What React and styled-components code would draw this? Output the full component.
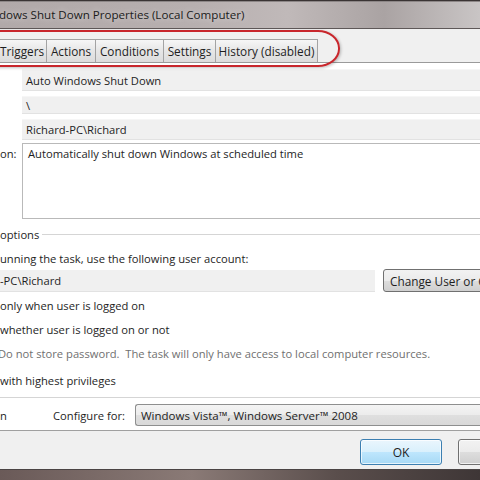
import React from "react";
import styled, { createGlobalStyle } from "styled-components";

const GlobalStyle = createGlobalStyle`
  html, body {
    margin: 0;
    padding: 0;
    background: #f0f0f0;
    overflow: hidden;
  }
  #root {
    width: 480px;
    height: 480px;
  }
`;

const tabs = [
  { name: "Triggers", width: 47, first: true },
  { name: "Actions", width: 50 },
  { name: "Conditions", width: 69 },
  { name: "Settings", width: 53 },
  { name: "History (disabled)", width: 103 },
];

function App() {
  return (
    <Window>
      <GlobalStyle />
      <TitleBar>
        <TitleText>dows Shut Down Properties (Local Computer)</TitleText>
      </TitleBar>
      <TabStrip>
        {tabs.map((t) => (
          <Tab key={t.name} $width={t.width} $first={t.first}>
            {t.name}
          </Tab>
        ))}
        <Highlight />
      </TabStrip>
      <Panel>
        <Field $height={22} $top={6} $left={22}>
          Auto Windows Shut Down
        </Field>
        <Field $height={18} $top={5} $left={22}>
          \
        </Field>
        <Field $height={21} $top={5} $left={22}>
          Richard-PC\Richard
        </Field>
        <DescRow>
          <Label $width={22} $top>on:</Label>
          <TextArea>Automatically shut down Windows at scheduled time</TextArea>
        </DescRow>
        <GroupHeader>
          <span>options</span>
          <Rule />
        </GroupHeader>
        <TextRow $top={10}>unning the task, use the following user account:</TextRow>
        <UserRow>
          <UserField>-PC\Richard</UserField>
          <Button $width={120}>Change User or Group...</Button>
        </UserRow>
        <TextRow $top={6}>only when user is logged on</TextRow>
        <TextRow $top={10}>whether user is logged on or not</TextRow>
        <TextRow $top={10} $muted $shift={-2}>
          Do not store password.&nbsp; The task will only have access to local computer resources.
        </TextRow>
        <TextRow $top={13}>with highest privileges</TextRow>
        <Divider />
        <ConfigRow>
          <Label $width={53}>n</Label>
          <Label $width={82}>Configure for:</Label>
          <Select>Windows Vista™, Windows Server™ 2008</Select>
        </ConfigRow>
      </Panel>
      <Footer>
        <FooterButton $focused>OK</FooterButton>
        <FooterButton>Cancel</FooterButton>
      </Footer>
      <FrameBottom />
    </Window>
  );
}

export default App;

const font = `"Open Sans", "Noto Sans", "Liberation Sans", sans-serif`;

const Window = styled.div`
  width: 480px;
  height: 480px;
  display: flex;
  flex-direction: column;
  background: #f0f0f0;
  font-family: ${font};
  font-size: 11.2px;
  color: #1e1e1e;
  overflow: hidden;
`;

const TitleBar = styled.div`
  height: 27px;
  flex-shrink: 0;
  display: flex;
  align-items: center;
  border-top: 1px solid #3a3434;
  border-bottom: 1px solid #5e5858;
  background: linear-gradient(
    to right,
    #b1a9a9 0%,
    #b7afaf 40%,
    #c0b9b9 60%,
    #aaa3a3 80%,
    #c9c5c5 100%
  );
  box-shadow: inset 0 1px 0 #8d8787;
`;

const TitleText = styled.span`
  font-size: 11.6px;
  color: #1b1b1b;
  margin-left: -1px;
  white-space: nowrap;
  text-shadow: 0 0 6px rgba(255, 255, 255, 0.6);
`;

const TabStrip = styled.div`
  position: relative;
  height: 33px;
  flex-shrink: 0;
  display: flex;
  align-items: flex-end;
  background: #f0f0f0;
  border-bottom: 1px solid #9a9a9a;
`;

const Tab = styled.div`
  width: ${(p) => p.$width}px;
  height: 23px;
  box-sizing: border-box;
  display: flex;
  align-items: center;
  justify-content: ${(p) => (p.$first ? "flex-start" : "center")};
  margin-left: ${(p) => (p.$first ? "0" : "-1px")};
  border: 1px solid #a3a3a3;
  border-bottom: none;
  border-left-width: ${(p) => (p.$first ? "0" : "1px")};
  background: linear-gradient(#f6f6f6, #e6e6e6 50%, #dcdcdc);
  font-size: 11.8px;
  white-space: nowrap;
`;

const Highlight = styled.div`
  position: absolute;
  left: -40px;
  top: 1px;
  width: 376px;
  height: 33px;
  border: 2px solid #c8262c;
  border-radius: 0 22px 22px 0 / 0 18px 18px 0;
  box-shadow: 1px 1px 3px rgba(0, 0, 0, 0.25);
  pointer-events: none;
`;

const Panel = styled.div`
  flex-shrink: 0;
  height: 368px;
  box-sizing: border-box;
  display: flex;
  flex-direction: column;
  background: #ffffff;
  border-bottom: 1px solid #a0a0a0;
`;

const Field = styled.div`
  height: ${(p) => p.$height}px;
  margin-top: ${(p) => p.$top}px;
  margin-left: ${(p) => p.$left}px;
  box-sizing: border-box;
  display: flex;
  align-items: center;
  padding-left: 4px;
  background: #f0f0f0;
  border-top: 1px solid #f6f6f6;
  border-bottom: 1px solid #e2e2e2;
  white-space: nowrap;
`;

const DescRow = styled.div`
  display: flex;
  margin-top: 3px;
  height: 76px;
`;

const Label = styled.div`
  width: ${(p) => p.$width}px;
  flex-shrink: 0;
  white-space: nowrap;
  display: flex;
  align-items: ${(p) => (p.$top ? "flex-start" : "center")};
  padding-top: ${(p) => (p.$top ? "3px" : "0")};
`;

const TextArea = styled.div`
  flex: 1;
  box-sizing: border-box;
  border: 1px solid #b9b9b9;
  border-right: none;
  padding: 2px 5px;
  background: #ffffff;
  white-space: nowrap;
`;

const GroupHeader = styled.div`
  display: flex;
  align-items: center;
  height: 14px;
  margin-top: 8px;
  white-space: nowrap;
`;

const Rule = styled.div`
  flex: 1;
  height: 1px;
  margin-left: 3px;
  background: #d5d5d5;
`;

const TextRow = styled.div`
  height: 14px;
  margin-top: ${(p) => p.$top}px;
  margin-left: ${(p) => p.$shift || 0}px;
  display: flex;
  align-items: center;
  white-space: nowrap;
  color: ${(p) => (p.$muted ? "#707070" : "#1e1e1e")};
`;

const UserRow = styled.div`
  display: flex;
  align-items: center;
  margin-top: 4px;
  height: 23px;
`;

const UserField = styled.div`
  width: 375px;
  height: 22px;
  flex-shrink: 0;
  box-sizing: border-box;
  display: flex;
  align-items: center;
  background: #f0f0f0;
  border-bottom: 1px solid #e2e2e2;
  white-space: nowrap;
`;

const Button = styled.div`
  margin-left: 8px;
  width: ${(p) => p.$width}px;
  height: 23px;
  flex-shrink: 0;
  box-sizing: border-box;
  display: flex;
  align-items: center;
  padding-left: 6px;
  border: 1px solid #707070;
  border-radius: 3px;
  background: linear-gradient(#f2f2f2, #ebebeb 50%, #dddddd 51%, #cfcfcf);
  font-size: 11.8px;
  white-space: nowrap;
`;

const Divider = styled.div`
  height: 1px;
  margin-top: 10px;
  background: #d5d5d5;
`;

const ConfigRow = styled.div`
  display: flex;
  margin-top: 6px;
  height: 22px;
`;

const Select = styled.div`
  flex: 1;
  box-sizing: border-box;
  display: flex;
  align-items: center;
  padding-left: 5px;
  border: 1px solid #8e8f8f;
  border-right: none;
  border-radius: 3px 0 0 3px;
  background: linear-gradient(#f4f4f4, #ececec 50%, #dfdfdf 51%, #d9d9d9);
  font-size: 11.5px;
  white-space: nowrap;
`;

const Footer = styled.div`
  flex: 1;
  display: flex;
  align-items: flex-start;
  padding: 8px 0 0 360px;
  gap: 16px;
  background: #f0f0f0;
`;

const FooterButton = styled.div`
  width: 82px;
  height: 26px;
  flex-shrink: 0;
  box-sizing: border-box;
  display: flex;
  align-items: center;
  justify-content: center;
  border: 1px solid ${(p) => (p.$focused ? "#3c7fb1" : "#707070")};
  border-radius: 3px;
  background: ${(p) =>
    p.$focused
      ? "linear-gradient(#eaf6fd, #d9f0fc 50%, #bee6fd 51%, #a7d9f5)"
      : "linear-gradient(#f2f2f2, #ebebeb 50%, #dddddd 51%, #cfcfcf)"};
  box-shadow: inset 0 0 0 1px rgba(255, 255, 255, 0.7);
  font-size: 12px;
`;

const FrameBottom = styled.div`
  height: 10px;
  flex-shrink: 0;
  border-top: 1px solid #4a4444;
  background: linear-gradient(to right, #6a5a58, #8a7a76 40%, #5a4e4c 70%, #3e3636);
`;
